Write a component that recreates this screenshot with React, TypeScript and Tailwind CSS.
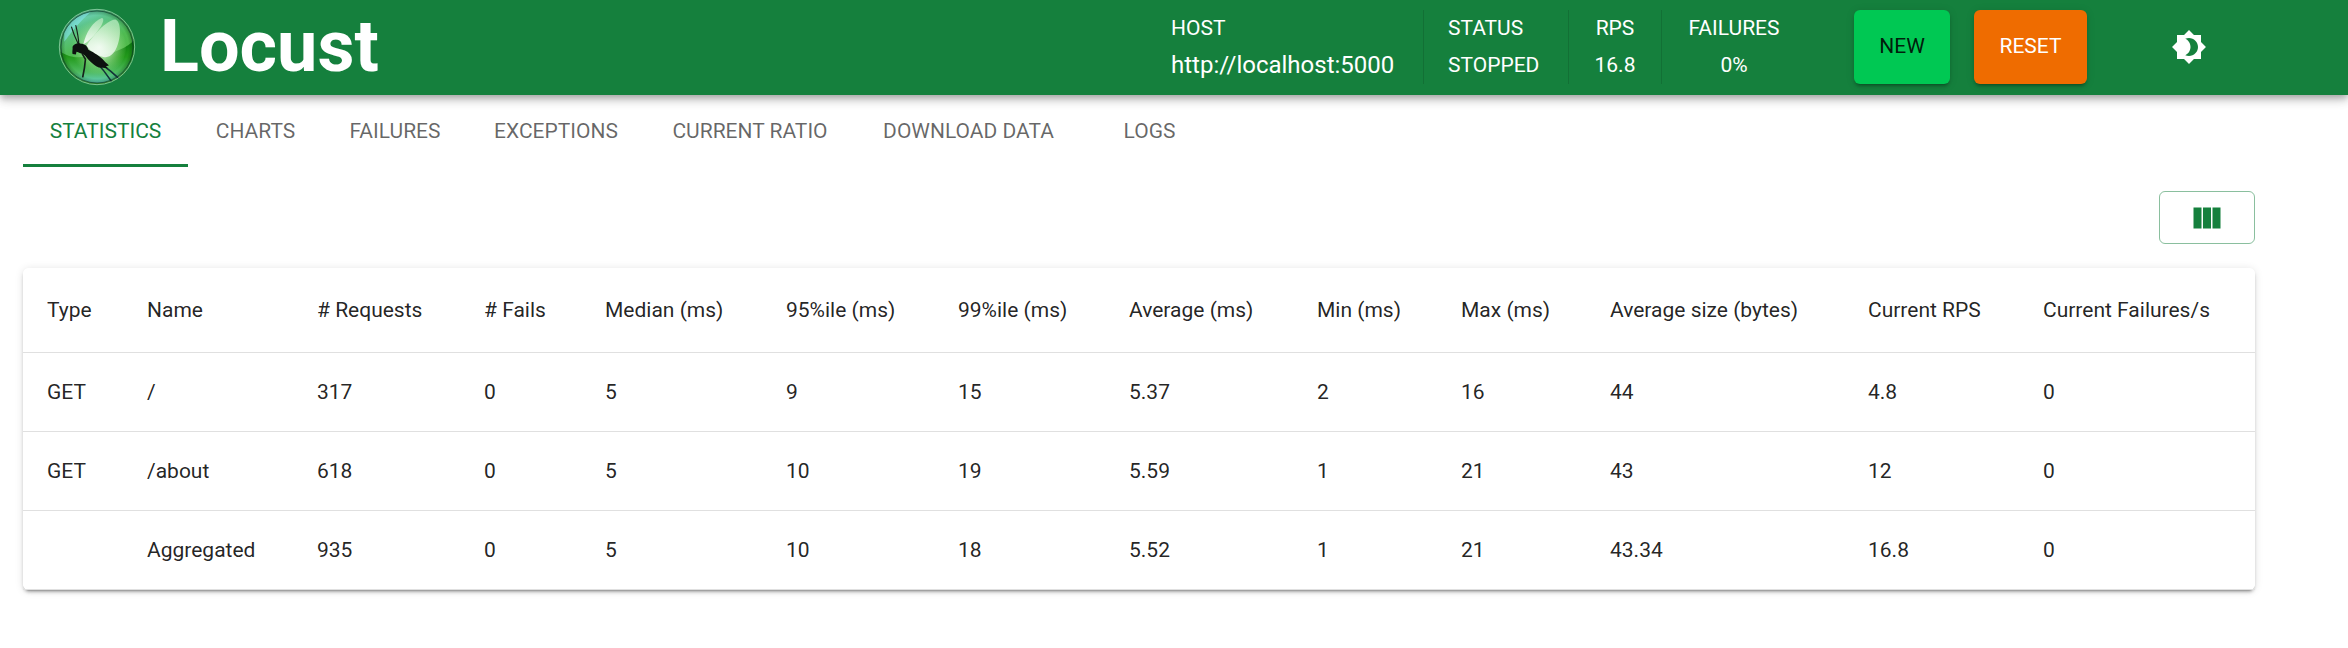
import type { ReactNode } from "react";
import { MdBrightness4 } from "react-icons/md";

const tabs = [
  { label: "Statistics", width: "w-[165px]", active: true },
  { label: "Charts", width: "w-[135px]" },
  { label: "Failures", width: "w-[144px]" },
  { label: "Exceptions", width: "w-[178px]" },
  { label: "Current ratio", width: "w-[210px]" },
  { label: "Download data", width: "w-[227px]" },
  { label: "Logs", width: "w-[135px]" },
];

const columns = [
  { title: "Type", width: "w-[100px]" },
  { title: "Name", width: "w-[170px]" },
  { title: "# Requests", width: "w-[167px]" },
  { title: "# Fails", width: "w-[121px]" },
  { title: "Median (ms)", width: "w-[181px]" },
  { title: "95%ile (ms)", width: "w-[172px]" },
  { title: "99%ile (ms)", width: "w-[171px]" },
  { title: "Average (ms)", width: "w-[188px]" },
  { title: "Min (ms)", width: "w-[144px]" },
  { title: "Max (ms)", width: "w-[149px]" },
  { title: "Average size (bytes)", width: "w-[258px]" },
  { title: "Current RPS", width: "w-[175px]" },
  { title: "Current Failures/s", width: "w-[236px]" },
];

const rows = [
  ["GET", "/", "317", "0", "5", "9", "15", "5.37", "2", "16", "44", "4.8", "0"],
  ["GET", "/about", "618", "0", "5", "10", "19", "5.59", "1", "21", "43", "12", "0"],
  ["", "Aggregated", "935", "0", "5", "10", "18", "5.52", "1", "21", "43.34", "16.8", "0"],
];

function Logo() {
  return (
    <svg viewBox="26 22 234 236" className="h-[78px] w-[78px]" aria-hidden="true">
      <defs>
        <linearGradient id="orb" x1="0.2" y1="0" x2="0.6" y2="1">
          <stop offset="0" stopColor="#7fdfe0" />
          <stop offset="0.22" stopColor="#5cc48c" />
          <stop offset="0.5" stopColor="#4fbb52" />
          <stop offset="1" stopColor="#55b83f" />
        </linearGradient>
        <linearGradient id="lower" x1="0" y1="0" x2="0" y2="1">
          <stop offset="0" stopColor="#0a7a10" />
          <stop offset="0.4" stopColor="#239a1c" />
          <stop offset="0.75" stopColor="#4fbb62" />
          <stop offset="1" stopColor="#62cfc0" />
        </linearGradient>
        <radialGradient id="glow" cx="150" cy="140" r="85" gradientUnits="userSpaceOnUse">
          <stop offset="0" stopColor="#fff" stopOpacity="0.95" />
          <stop offset="0.45" stopColor="#d6f5cf" stopOpacity="0.6" />
          <stop offset="1" stopColor="#9fe58a" stopOpacity="0" />
        </radialGradient>
        <radialGradient id="edge" cx="0.5" cy="0.5" r="0.5">
          <stop offset="0.84" stopColor="#003c08" stopOpacity="0" />
          <stop offset="0.96" stopColor="#003c08" stopOpacity="0.35" />
          <stop offset="1" stopColor="#003c08" stopOpacity="0.6" />
        </radialGradient>
        <linearGradient id="wing" x1="0.6" y1="0" x2="0.2" y2="1">
          <stop offset="0" stopColor="#c9f0cb" stopOpacity="0.65" />
          <stop offset="1" stopColor="#fff" stopOpacity="0.85" />
        </linearGradient>
      </defs>
      <circle cx="143" cy="140" r="114" fill="url(#orb)" />
      <path d="M30 152C70 182 105 168 145 165C195 160 235 142 256 118A114 114 0 1 1 30 152Z" fill="url(#lower)" />
      <circle cx="143" cy="140" r="114" fill="url(#edge)" />
      <circle cx="143" cy="140" r="88" fill="url(#glow)" />
      <path d="M44 96A107 107 0 0 1 124 34C96 58 70 88 44 124Z" fill="#84e4ea" opacity="0.6" />
      <path d="M102 132C108 98 132 60 158 52C168 54 158 76 142 95C130 110 115 125 102 132Z" fill="url(#wing)" />
      <path d="M112 136C130 108 168 60 199 57C214 62 217 102 206 132C198 158 182 175 162 170C142 166 122 152 112 136Z" fill="url(#wing)" />
      <g fill="none" stroke="#15211a" strokeLinecap="round" strokeLinejoin="round">
        <path d="M66 80C72 102 80 118 86 130M79 75C84 96 87 112 88 130" strokeWidth="3.5" />
        <path d="M98 160L108 177L105 203L100 230" strokeWidth="5" />
        <path d="M148 194L162 210L186 243" strokeWidth="4.5" stroke="#123238" />
        <path d="M162 196L184 213L208 234" strokeWidth="5" stroke="#123238" />
      </g>
      <path
        d="M69 139C73 131 84 127 94 130C106 130 114 137 117 148C134 157 154 168 165 182C171 189 176 191 179 196L170 198L176 204L160 203C146 204 136 196 126 187C115 178 107 164 98 160C90 158 84 154 81 154L79 163L69 161C67 154 70 148 69 139Z"
        fill="#0d110f"
      />
      <circle cx="143" cy="140" r="109" fill="none" stroke="#0c3b2c" strokeWidth="2.5" opacity="0.8" />
      <circle cx="143" cy="140" r="114" fill="none" stroke="#8ed3a4" strokeWidth="3" opacity="0.85" />
    </svg>
  );
}

function ColumnsIcon() {
  return (
    <svg viewBox="0 0 24 24" className="size-9" fill="currentColor" aria-hidden="true">
      <path d="M14.67 5v14H9.33V5zm1 14H21V5h-5.33zm-7.34 0V5H3v14z" />
    </svg>
  );
}

function Stat({ label, children, className }: { label: string; children: ReactNode; className: string }) {
  return (
    <div className={`flex flex-col gap-px leading-9 ${className}`}>
      <span>{label}</span>
      {children}
    </div>
  );
}

function Divider() {
  return <div className="mx-6 w-px bg-black/12" />;
}

export default function App() {
  return (
    <div className="min-h-screen bg-white font-['Roboto',sans-serif] text-[21px] text-black/87">
      <header className="relative flex h-[95px] items-center justify-between bg-[#15803d] pr-[129px] pb-px pl-[58px] text-white shadow-[0_3px_6px_-1px_rgba(0,0,0,0.2),0_6px_8px_rgba(0,0,0,0.14),0_1px_15px_rgba(0,0,0,0.12)]">
        <a href="#" className="flex items-center gap-6">
          <Logo />
          <h1 className="text-[72px] leading-[84px] font-bold">Locust</h1>
        </a>
        <div className="flex items-center gap-[72px]">
          <div className="flex h-[74px]">
            <Stat label="HOST" className="w-[228px] items-start">
              <span className="text-2xl leading-9">http://localhost:5000</span>
            </Stat>
            <Divider />
            <Stat label="STATUS" className="w-24 items-start">
              <span>STOPPED</span>
            </Stat>
            <Divider />
            <Stat label="RPS" className="w-11 items-center">
              <span>16.8</span>
            </Stat>
            <Divider />
            <Stat label="FAILURES" className="w-24 items-center">
              <span>0%</span>
            </Stat>
          </div>
          <div className="flex h-[74px] gap-6">
            <button
              type="button"
              className="w-24 rounded-md bg-[#00c853] text-black/87 uppercase shadow-[0_4px_2px_-3px_rgba(0,0,0,0.2),0_3px_3px_rgba(0,0,0,0.14),0_1px_8px_rgba(0,0,0,0.12)]"
            >
              New
            </button>
            <button
              type="button"
              className="w-[113px] rounded-md bg-[#ef6c00] text-white uppercase shadow-[0_4px_2px_-3px_rgba(0,0,0,0.2),0_3px_3px_rgba(0,0,0,0.14),0_1px_8px_rgba(0,0,0,0.12)]"
            >
              Reset
            </button>
          </div>
          <button type="button" aria-label="Toggle theme" className="rounded-full p-3">
            <MdBrightness4 className="size-9" />
          </button>
        </div>
      </header>

      <main className="pr-[93px] pl-[23px]">
        <nav className="flex" aria-label="Report sections">
          {tabs.map((tab) => (
            <button
              key={tab.label}
              type="button"
              aria-current={tab.active ? "page" : undefined}
              className={`h-[72px] shrink-0 border-b-3 pt-1 uppercase ${tab.width} ${
                tab.active ? "border-[#15803d] text-[#15803d]" : "border-transparent text-black/60"
              }`}
            >
              {tab.label}
            </button>
          ))}
        </nav>

        <div className="mt-6 flex justify-end">
          <button
            type="button"
            aria-label="Select columns"
            className="flex h-[53px] w-24 items-center justify-center rounded-md border border-[#15803d]/50 text-[#15803d]"
          >
            <ColumnsIcon />
          </button>
        </div>

        <div className="mt-6 rounded-md shadow-[0_4px_2px_-3px_rgba(0,0,0,0.3),0_3px_3px_rgba(0,0,0,0.14),0_1px_8px_rgba(0,0,0,0.12)]">
          <table className="w-full table-fixed border-collapse rounded-md bg-white text-left">
            <thead>
              <tr className="border-b border-[#e0e0e0]">
                {columns.map((column) => (
                  <th
                    key={column.title}
                    scope="col"
                    className={`py-6 pl-6 leading-9 font-normal whitespace-nowrap ${column.width}`}
                  >
                    {column.title}
                  </th>
                ))}
              </tr>
            </thead>
            <tbody>
              {rows.map((row) => (
                <tr key={row[1]} className="border-b border-[#e0e0e0]">
                  {row.map((value, index) => (
                    <td key={columns[index].title} className="py-6 pl-6 leading-[30px]">
                      {value}
                    </td>
                  ))}
                </tr>
              ))}
            </tbody>
          </table>
        </div>
      </main>
    </div>
  );
}
